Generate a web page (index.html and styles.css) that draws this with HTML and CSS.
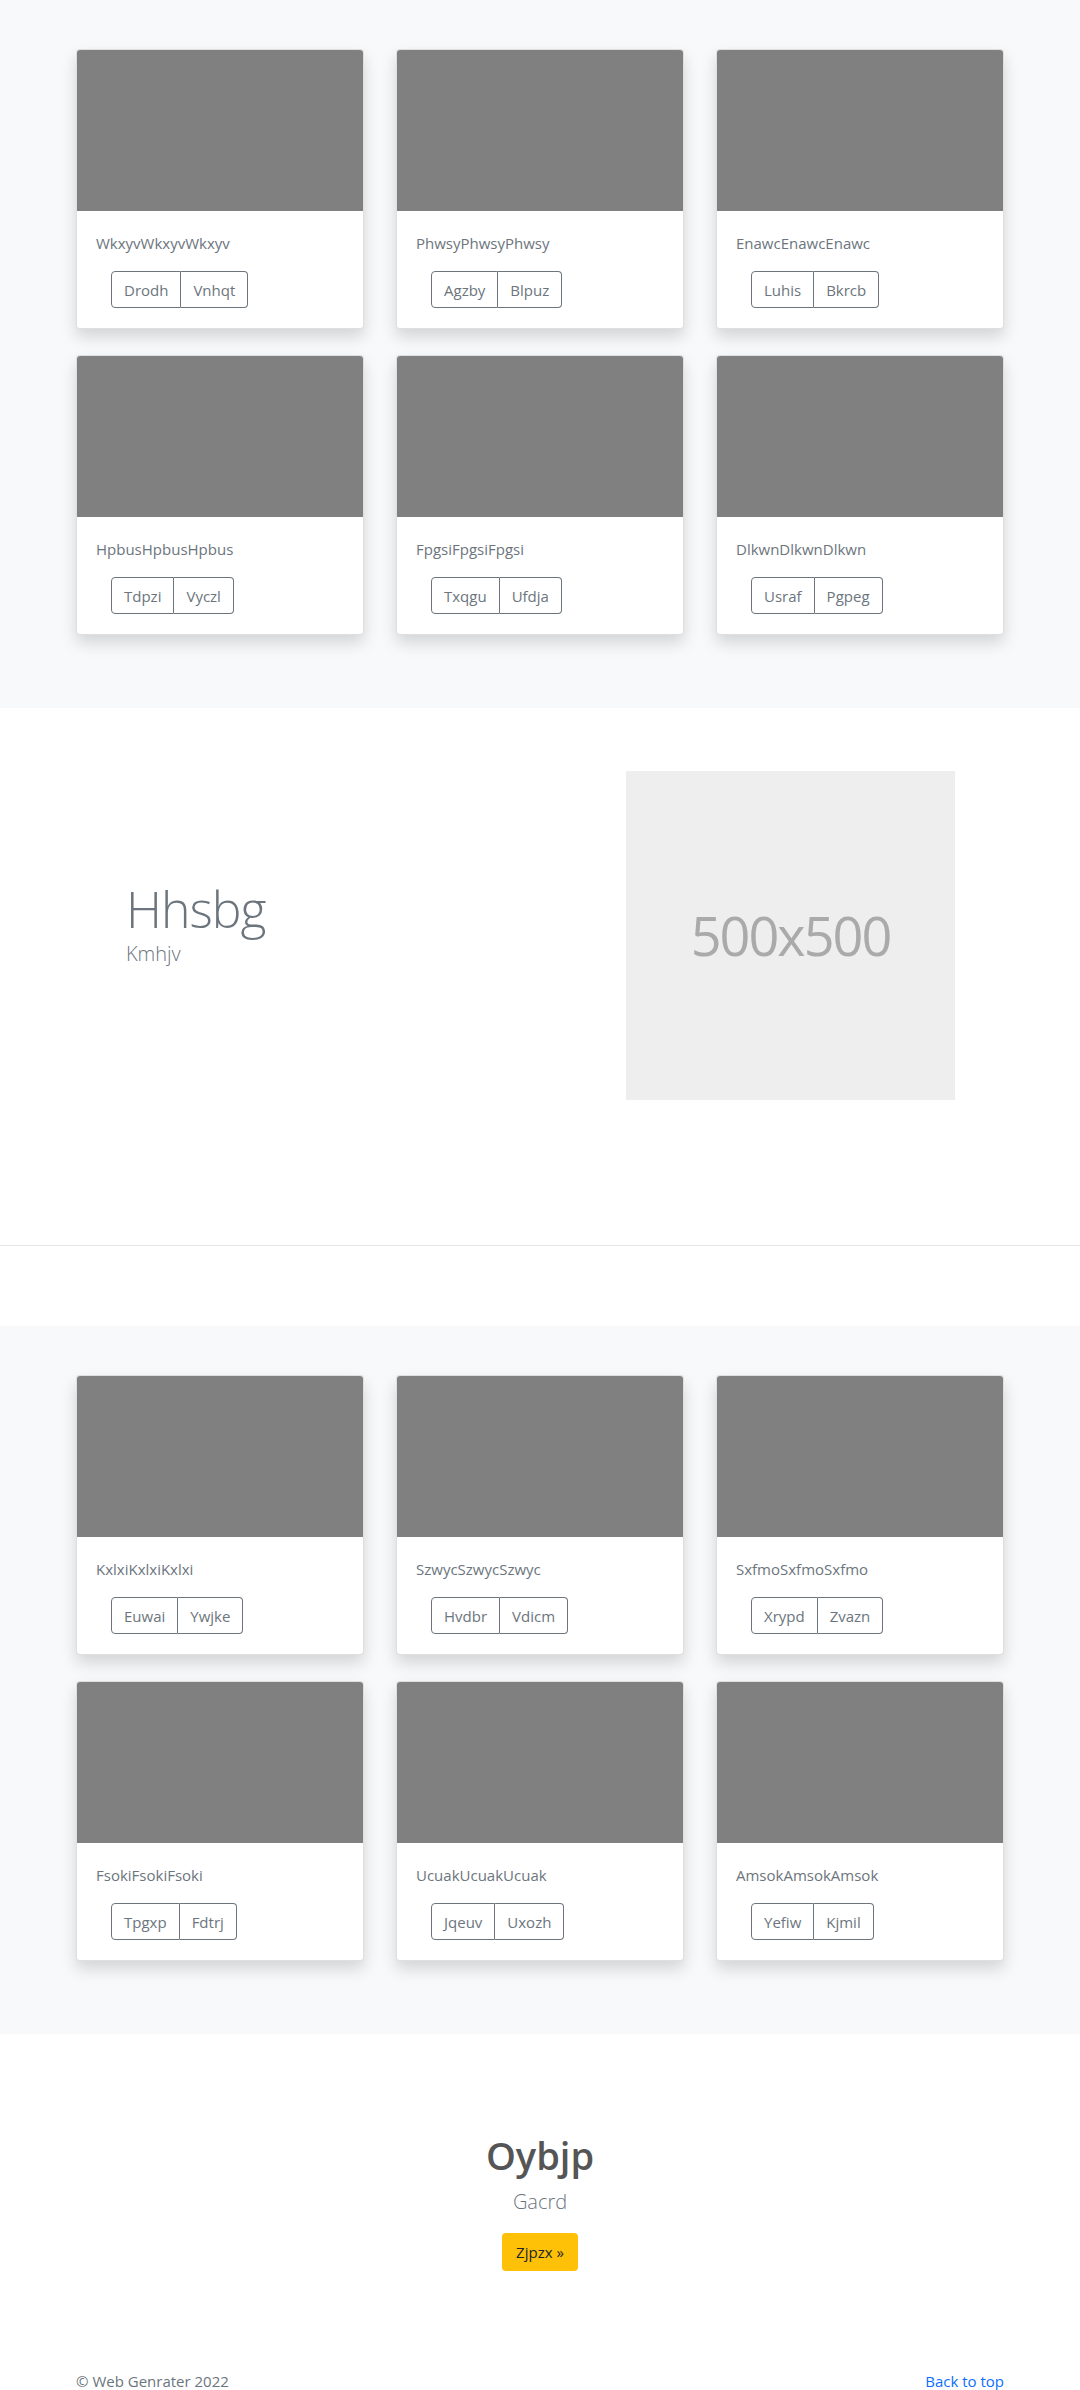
FILE: index.html
```html
<!DOCTYPE html>
<html lang="en">
<head>
    <meta charset="UTF-8">
    <meta name="viewport" content="width=device-width, initial-scale=1.0">
    <title>Web Genrater</title>
    <link rel="stylesheet" href="styles.css">
</head>
<body>
    <main>
        <!-- first album -->
        <section class="album">
            <div class="container card-grid">
                <div class="card">
                    <div class="card-img"></div>
                    <div class="card-body">
                        <p class="card-text">WkxyvWkxyvWkxyv</p>
                        <div class="btn-group">
                            <button class="btn-outline">Drodh</button>
                            <button class="btn-outline">Vnhqt</button>
                        </div>
                    </div>
                </div>
                <div class="card">
                    <div class="card-img"></div>
                    <div class="card-body">
                        <p class="card-text">PhwsyPhwsyPhwsy</p>
                        <div class="btn-group">
                            <button class="btn-outline">Agzby</button>
                            <button class="btn-outline">Blpuz</button>
                        </div>
                    </div>
                </div>
                <div class="card">
                    <div class="card-img"></div>
                    <div class="card-body">
                        <p class="card-text">EnawcEnawcEnawc</p>
                        <div class="btn-group">
                            <button class="btn-outline">Luhis</button>
                            <button class="btn-outline">Bkrcb</button>
                        </div>
                    </div>
                </div>
                <div class="card">
                    <div class="card-img"></div>
                    <div class="card-body">
                        <p class="card-text">HpbusHpbusHpbus</p>
                        <div class="btn-group">
                            <button class="btn-outline">Tdpzi</button>
                            <button class="btn-outline">Vyczl</button>
                        </div>
                    </div>
                </div>
                <div class="card">
                    <div class="card-img"></div>
                    <div class="card-body">
                        <p class="card-text">FpgsiFpgsiFpgsi</p>
                        <div class="btn-group">
                            <button class="btn-outline">Txqgu</button>
                            <button class="btn-outline">Ufdja</button>
                        </div>
                    </div>
                </div>
                <div class="card">
                    <div class="card-img"></div>
                    <div class="card-body">
                        <p class="card-text">DlkwnDlkwnDlkwn</p>
                        <div class="btn-group">
                            <button class="btn-outline">Usraf</button>
                            <button class="btn-outline">Pgpeg</button>
                        </div>
                    </div>
                </div>
            </div>
        </section>

        <!-- feature -->
        <section class="feature">
            <div class="container feature-row">
                <div class="feature-text">
                    <h2>Hhsbg</h2>
                    <p>Kmhjv</p>
                </div>
                <div class="placeholder">500x500</div>
            </div>
        </section>

        <hr class="divider">

        <!-- second album -->
        <section class="album">
            <div class="container card-grid">
                <div class="card">
                    <div class="card-img"></div>
                    <div class="card-body">
                        <p class="card-text">KxlxiKxlxiKxlxi</p>
                        <div class="btn-group">
                            <button class="btn-outline">Euwai</button>
                            <button class="btn-outline">Ywjke</button>
                        </div>
                    </div>
                </div>
                <div class="card">
                    <div class="card-img"></div>
                    <div class="card-body">
                        <p class="card-text">SzwycSzwycSzwyc</p>
                        <div class="btn-group">
                            <button class="btn-outline">Hvdbr</button>
                            <button class="btn-outline">Vdicm</button>
                        </div>
                    </div>
                </div>
                <div class="card">
                    <div class="card-img"></div>
                    <div class="card-body">
                        <p class="card-text">SxfmoSxfmoSxfmo</p>
                        <div class="btn-group">
                            <button class="btn-outline">Xrypd</button>
                            <button class="btn-outline">Zvazn</button>
                        </div>
                    </div>
                </div>
                <div class="card">
                    <div class="card-img"></div>
                    <div class="card-body">
                        <p class="card-text">FsokiFsokiFsoki</p>
                        <div class="btn-group">
                            <button class="btn-outline">Tpgxp</button>
                            <button class="btn-outline">Fdtrj</button>
                        </div>
                    </div>
                </div>
                <div class="card">
                    <div class="card-img"></div>
                    <div class="card-body">
                        <p class="card-text">UcuakUcuakUcuak</p>
                        <div class="btn-group">
                            <button class="btn-outline">Jqeuv</button>
                            <button class="btn-outline">Uxozh</button>
                        </div>
                    </div>
                </div>
                <div class="card">
                    <div class="card-img"></div>
                    <div class="card-body">
                        <p class="card-text">AmsokAmsokAmsok</p>
                        <div class="btn-group">
                            <button class="btn-outline">Yefiw</button>
                            <button class="btn-outline">Kjmil</button>
                        </div>
                    </div>
                </div>
            </div>
        </section>

        <!-- call to action -->
        <section class="cta">
            <h1>Oybjp</h1>
            <p class="lead">Gacrd</p>
            <a href="#" class="btn-warning">Zjpzx &raquo;</a>
        </section>
    </main>

    <footer class="container footer">
        <p>&copy; Web Genrater 2022</p>
        <a href="#">Back to top</a>
    </footer>
</body>
</html>
```

FILE: styles.css
```css
* {
    margin: 0;
    padding: 0;
    box-sizing: border-box;
}

body {
    font-family: 'Open Sans', 'Noto Sans', sans-serif;
    font-size: 15px;
    line-height: 1.6;
    color: #212529;
    background: #fff;
}

.container {
    width: 928px;
    margin: 0 auto;
}

/* album */
.album {
    background: #f8f9fa;
    padding: 49px 0 73px;
}

.card-grid {
    display: grid;
    grid-template-columns: repeat(3, 288px);
    column-gap: 32px;
    row-gap: 26px;
}

.card {
    background: #fff;
    border: 1px solid rgba(0, 0, 0, 0.125);
    border-radius: 4px;
    box-shadow: 0 8px 16px rgba(0, 0, 0, 0.15);
    overflow: hidden;
    height: 280px;
}

.card-img {
    height: 161px;
    background: #808080;
}

.card-body {
    padding: 20px 19px 20px;
}

.card-text {
    color: #6c757d;
    line-height: 24px;
    margin-bottom: 16px;
}

.btn-group {
    display: inline-flex;
    margin-left: 15px;
}

.btn-outline {
    font-family: inherit;
    font-size: 15px;
    color: #6c757d;
    background: transparent;
    border: 1px solid #6c757d;
    height: 37px;
    padding: 0 12px;
    cursor: pointer;
}

.btn-outline:first-child {
    border-radius: 4px 0 0 4px;
}

.btn-outline + .btn-outline {
    border-left: none;
    border-radius: 0 4px 4px 0;
}

/* feature */
.feature {
    padding: 63px 0 145px;
}

.feature-row {
    display: flex;
    align-items: center;
    justify-content: space-between;
}

.feature-text {
    padding-left: 50px;
}

.feature-text h2 {
    font-size: 50px;
    font-weight: 300;
    letter-spacing: -1px;
    line-height: 1.2;
    color: #6c757d;
}

.feature-text p {
    font-size: 20px;
    font-weight: 300;
    line-height: 1.5;
    color: #6c757d;
    margin-bottom: 23px;
}

.placeholder {
    width: 329px;
    height: 329px;
    margin-right: 49px;
    background: #eee;
    color: #aaa;
    font-size: 54px;
    letter-spacing: -2px;
    display: flex;
    align-items: center;
    justify-content: center;
}

.divider {
    border: none;
    border-top: 1px solid #e5e5e5;
    margin-bottom: 80px;
}

/* call to action */
.cta {
    text-align: center;
    padding: 99px 0 98px;
}

.cta h1 {
    font-size: 38px;
    font-weight: 600;
    line-height: 1.2;
    color: #555;
    margin-bottom: 8px;
}

.cta .lead {
    font-size: 20px;
    font-weight: 300;
    line-height: 1.5;
    color: #6c757d;
    margin-bottom: 16px;
}

.btn-warning {
    display: inline-block;
    background: #ffc107;
    color: #212529;
    text-decoration: none;
    height: 38px;
    line-height: 38px;
    padding: 0 14px;
    border-radius: 4px;
}

/* footer */
.footer {
    display: flex;
    justify-content: space-between;
    color: #6c757d;
    line-height: 24px;
    padding-bottom: 24px;
}

.footer a {
    color: #0d6efd;
    text-decoration: none;
}
```
